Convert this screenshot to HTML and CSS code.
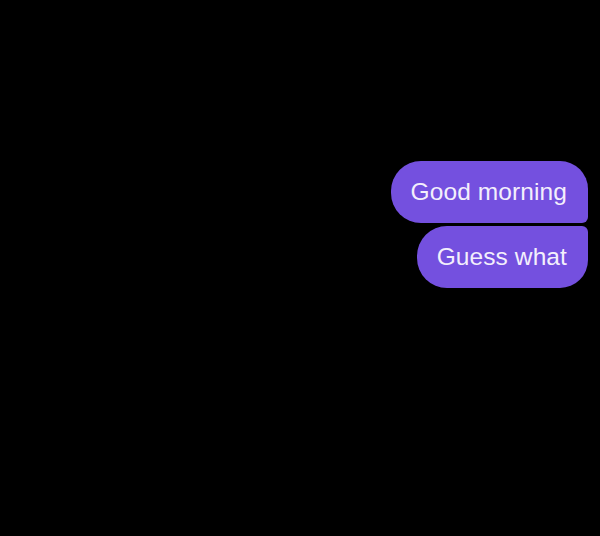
FILE: index.html
```html
<!DOCTYPE html>
<html>
<head>
<meta charset="utf-8">
<link rel="stylesheet" href="styles.css">
</head>
<body>
<div class="thread">
  <div class="bubble first">Good morning</div>
  <div class="bubble last">Guess what</div>
</div>
</body>
</html>
```
FILE: styles.css
```css
html, body {
  margin: 0;
  padding: 0;
  background: #000;
  width: 600px;
  height: 536px;
  overflow: hidden;
}
.thread {
  display: flex;
  flex-direction: column;
  align-items: flex-end;
  gap: 3px;
  padding: 161px 12px 0 0;
}
.bubble {
  box-sizing: border-box;
  height: 62px;
  display: flex;
  align-items: center;
  padding: 0 21px 1px 20px;
  background: #7450df;
  color: #f3effc;
  font-family: "Liberation Sans", Arial, sans-serif;
  font-size: 24.5px;
  letter-spacing: 0.1px;
}
.first {
  border-radius: 30px 28px 6px 30px;
}
.last {
  border-radius: 30px 6px 28px 30px;
}
```
